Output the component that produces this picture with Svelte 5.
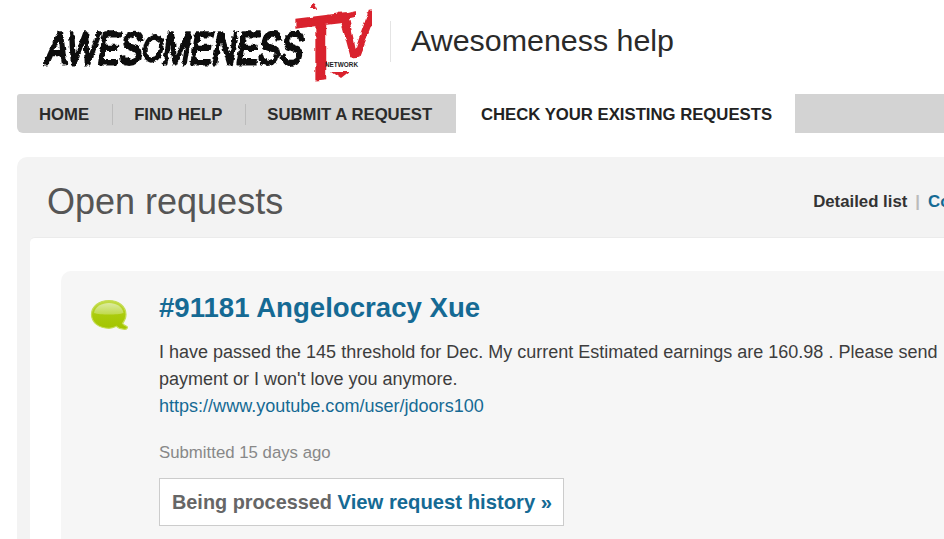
<svelte:head><title>Open requests</title></svelte:head>

<script>
  const tabs = [
    { label: 'HOME' },
    { label: 'FIND HELP' },
    { label: 'SUBMIT A REQUEST' }
  ];
</script>

<div class="page">
  <header class="masthead">
    <a class="logo" href="#top" aria-label="AwesomenessTV Network">
      <svg width="332" height="80" viewBox="0 0 332 80">
        <defs>
          <filter id="rough" x="-5%" y="-20%" width="110%" height="140%">
            <feTurbulence type="fractalNoise" baseFrequency="0.22" numOctaves="3" seed="7" result="n" />
            <feDisplacementMap in="SourceGraphic" in2="n" scale="4.5" xChannelSelector="R" yChannelSelector="G" />
            <feGaussianBlur stdDeviation="0.45" />
          </filter>
          <filter id="rough-red" x="-10%" y="-10%" width="120%" height="120%">
            <feTurbulence type="fractalNoise" baseFrequency="0.12" numOctaves="3" seed="11" result="n" />
            <feDisplacementMap in="SourceGraphic" in2="n" scale="4" xChannelSelector="R" yChannelSelector="G" />
            <feGaussianBlur stdDeviation="0.4" />
          </filter>
        </defs>
        <g filter="url(#rough)">
          <text class="word" transform="translate(4 62) skewX(-9) scale(1 1.14)" textLength="257" lengthAdjust="spacingAndGlyphs">AWES<tspan class="small" dy="-3">O</tspan><tspan dy="3">MENESS</tspan></text>
        </g>
        <g filter="url(#rough-red)">
          <text class="tee" transform="translate(251 76) rotate(-7 30 -30) skewX(-7) scale(1 1.05)" textLength="52" lengthAdjust="spacingAndGlyphs">T</text>
          <path class="splash" d="M296 14L316 9L314 16L296 20ZM271 7L274 1L277 7Z" />
          <text class="vee" transform="translate(295 55) rotate(-4 20 0) skewX(-8)" textLength="40" lengthAdjust="spacingAndGlyphs">V</text>
          <path class="splash" d="M291 69L310 69L301 76Z" />
        </g>
        <text class="net" x="285" y="64.500" textLength="33" lengthAdjust="spacingAndGlyphs">NETWORK</text>
      </svg>
    </a>
    <span class="divider"></span>
    <span class="brand">Awesomeness help</span>
  </header>

  <nav class="tabs">
    <ul class="tablist">
      {#each tabs as tab}
        <li class="tab"><a href="#top">{tab.label}</a></li>
      {/each}
    </ul>
    <a class="active" href="#top">CHECK YOUR EXISTING REQUESTS</a>
  </nav>

  <main class="panel">
    <div class="panel-head">
      <h1>Open requests</h1>
      <div class="views"><b>Detailed list</b><i>|</i><a href="#top">Compact list</a></div>
    </div>
    <section class="sheet">
      <article class="request">
        <svg class="bubble" width="40" height="36" viewBox="0 0 40 36">
          <defs>
            <linearGradient id="body" x1="0" y1="0" x2="0" y2="1">
              <stop offset="0" stop-color="#c4dc4a" />
              <stop offset="0.5" stop-color="#aacb0c" />
              <stop offset="1" stop-color="#a3c400" />
            </linearGradient>
            <linearGradient id="shine" x1="0" y1="0" x2="0" y2="1">
              <stop offset="0" stop-color="#dcebA0" />
              <stop offset="1" stop-color="#c0da4c" />
            </linearGradient>
          </defs>
          <path d="M20 2.500C29.500 2.500 37 8.500 37 16.500C37 20 35.500 23 33.500 25.300C34.500 26.800 36.500 27.800 38 28.500C39 29.500 38 31.500 35.500 31.300C32 31 29 29.800 27.500 28.300C25 29.500 22.500 30.300 20 30.300C10 30.300 2.500 24.500 2.500 16.500C2.500 8.500 10 2.500 20 2.500Z" fill="url(#body)" stroke="#c5dd55" stroke-width="1.200" />
          <path d="M5 15C6 8.500 13 5 20 5C27 5 33.500 8.500 34.500 15C29 17 11 17 5 15Z" fill="url(#shine)" />
        </svg>
        <div class="content">
          <h2><a href="#top">#91181 Angelocracy Xue</a></h2>
          <p class="message">I have passed the 145 threshold for Dec. My current Estimated earnings are 160.98 . Please send payment or I won't love you anymore.<br /><a class="url" href="#top">https://www.youtube.com/user/jdoors100</a></p>
          <p class="meta">Submitted 15 days ago</p>
          <div class="status"><span>Being processed</span> <a href="#top">View request history »</a></div>
        </div>
      </article>
    </section>
  </main>
</div>

<style>
  :global(html), :global(body) {
    margin: 0;
    overflow: hidden;
    background: #fff;
  }
  .page {
    width: 1160px;
    height: 539px;
    overflow: hidden;
    padding-left: 17px;
    box-sizing: border-box;
    font-family: "Liberation Sans", Arial, sans-serif;
    color: #333;
  }
  a { color: #156a94; text-decoration: none; }
  .masthead {
    height: 94px;
    display: flex;
    align-items: flex-start;
  }
  .logo { display: block; margin: 2px 0 0 23px; width: 332px; height: 80px; }
  .word { font: 400 40px "Liberation Sans", sans-serif; fill: #111; stroke: #111; stroke-width: 2.6px; stroke-linejoin: round; }
  .small { font-size: 32px; }
  .tee { font: 400 84px "Liberation Sans", sans-serif; fill: #d9232d; stroke: #d9232d; stroke-width: 3px; }
  .vee { font: 700 66px "Liberation Sans", sans-serif; fill: #d9232d; }
  .splash { fill: #d9232d; }
  .net { font: 700 7.5px "Liberation Sans", sans-serif; fill: #222; }
  .divider {
    width: 1px;
    height: 41px;
    margin: 21px 20px 0 18px;
    background: #e4e4e4;
  }
  .brand {
    margin-top: 21px;
    font-size: 30.4px;
    line-height: 38px;
    color: #2a2a2a;
  }
  .tabs {
    display: flex;
    height: 39px;
    background: #d3d3d3;
    border-radius: 3px 0 0 6px;
  }
  .tablist {
    display: flex;
    align-items: center;
    list-style: none;
    margin: 0;
    padding: 1px 0 0 22px;
    width: 439px;
    box-sizing: border-box;
  }
  .tab { display: flex; align-items: center; height: 21px; line-height: 21px; }
  .tab a {
    color: #2b2b2b;
    font-size: 16.72px;
    font-weight: 700;
  }
  .tab + .tab { margin-left: 23px; padding-left: 21px; border-left: 1px solid #bcbcbc; }
  .active {
    display: block;
    box-sizing: border-box;
    width: 339px;
    background: #fff;
    color: #222;
    font-size: 16.7px;
    font-weight: 700;
    line-height: 41px;
    text-align: center;
    padding-left: 2px;
  }
  .panel {
    margin-top: 24px;
    padding: 0 0 0 13px;
    background: #f3f3f3;
    border-radius: 10px 0 0 0;
    height: 400px;
  }
  .panel-head {
    height: 80px;
    display: flex;
    align-items: flex-start;
    padding-left: 17px;
  }
  h1 {
    margin: 23px 0 0;
    font-size: 36px;
    line-height: 44px;
    font-weight: 400;
    color: #555;
  }
  .views {
    margin: 35px 0 0 530px;
    font-size: 16.8px;
    line-height: 20px;
    white-space: nowrap;
  }
  .views b { color: #333; }
  .views i { font-style: normal; font-weight: 700; color: #bbb; margin: 0 8px; }
  .views a { font-weight: 700; }
  .sheet {
    background: #fff;
    border-radius: 5px 0 0 0;
    border-top: 1px solid #ebebeb;
    padding: 33px 0 0 31px;
    height: 320px;
    box-sizing: border-box;
  }
  .request {
    display: flex;
    background: #f6f6f6;
    border-radius: 10px 0 0 0;
    height: 300px;
    padding-left: 28px;
  }
  .bubble { flex: none; margin-top: 27px; }
  .content { margin-left: 30px; width: 790px; }
  h2 {
    margin: 20px 0 0;
    font-size: 27.6px;
    line-height: 34px;
    font-weight: 700;
  }
  .message {
    margin: 14px 0 0;
    font-size: 18px;
    line-height: 27px;
    color: #3d3d3d;
  }
  .url { font-size: 18.05px; }
  .meta {
    margin: 19px 0 0;
    font-size: 16.8px;
    line-height: 27px;
    color: #888;
  }
  .status {
    display: inline-block;
    margin-top: 12px;
    padding: 0 11px 0 12px;
    height: 46px;
    line-height: 46px;
    border: 1px solid #ccc;
    background: #fff;
    font-size: 20.25px;
    font-weight: 700;
    white-space: nowrap;
  }
  .status span { color: #666; font-size: 19.85px; }
</style>
